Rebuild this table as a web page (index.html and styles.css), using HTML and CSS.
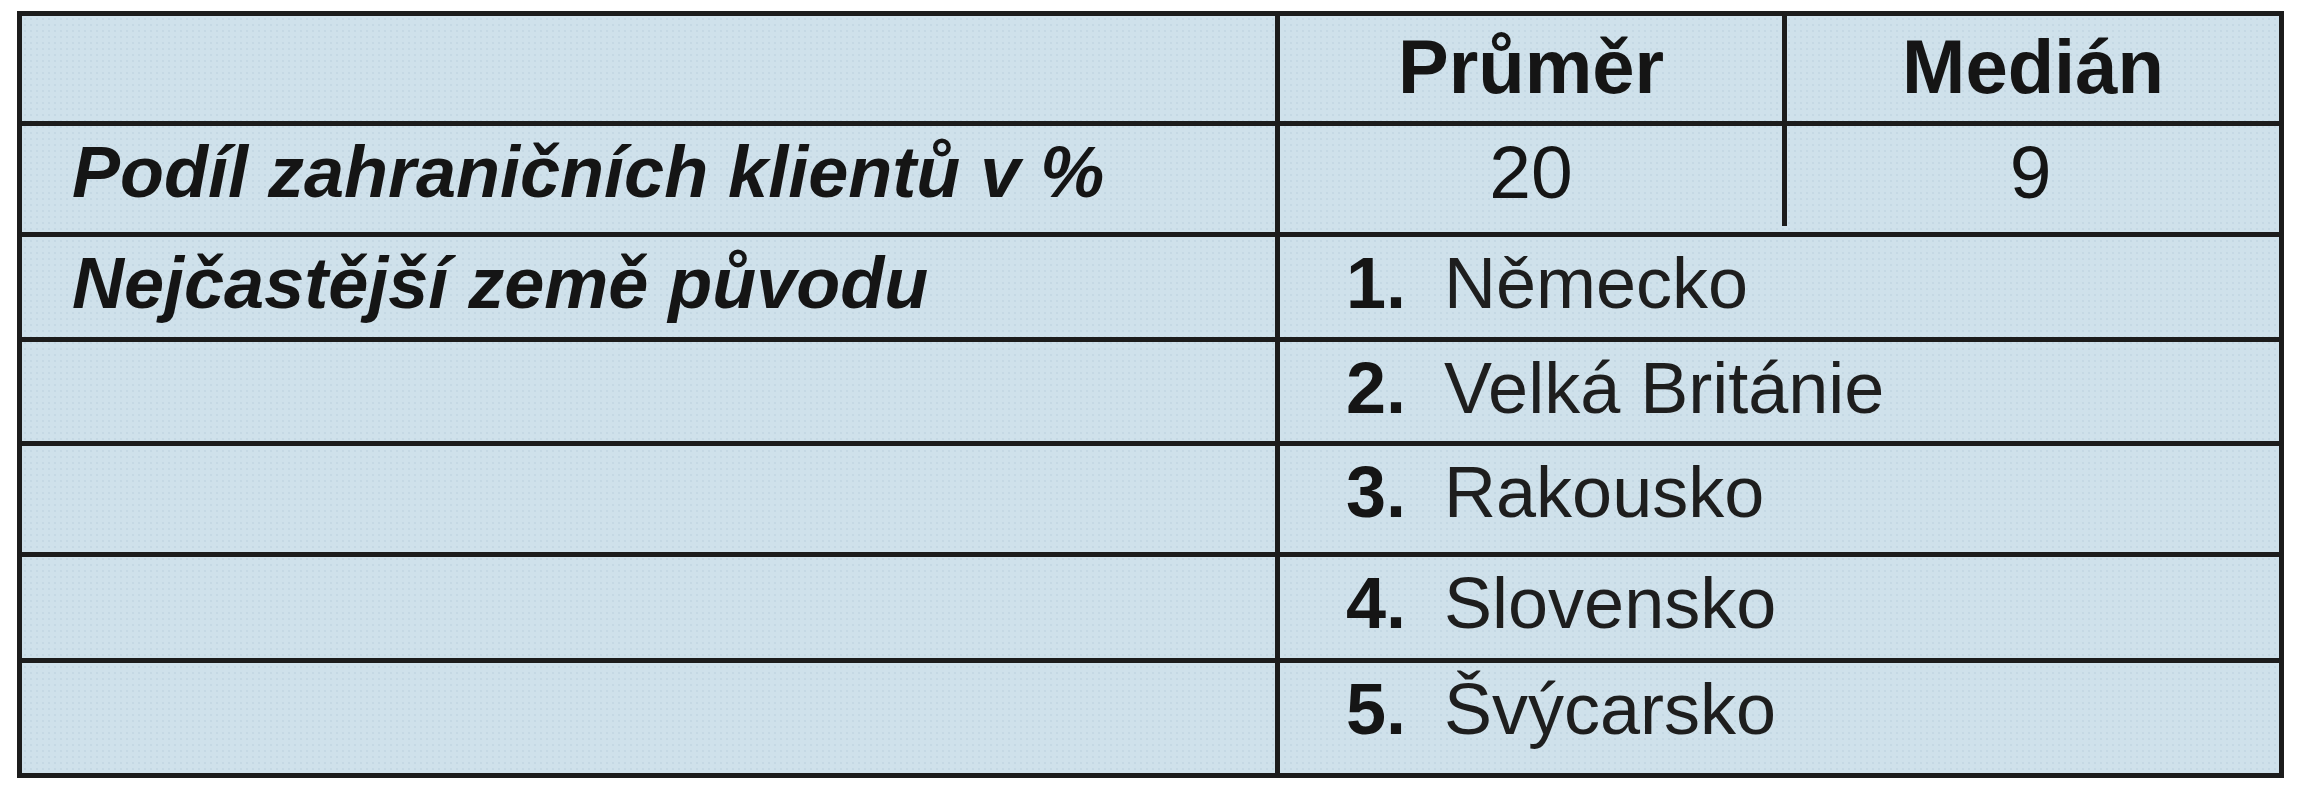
FILE: index.html
```html
<!DOCTYPE html>
<html lang="cs">
<head>
<meta charset="utf-8">
<title>Zahraniční klienti</title>
<link rel="stylesheet" href="styles.css">
</head>
<body>
<div class="tbl">
  <div class="row r-head">
    <div class="cell c-label"></div>
    <div class="cell c-val head bord">Průměr</div>
    <div class="cell c-val head">Medián</div>
  </div>
  <div class="row r1">
    <div class="cell c-label label">Podíl zahraničních klientů v %</div>
    <div class="cell c-val num split">20</div>
    <div class="cell c-val num">9</div>
  </div>
  <div class="row list r2">
    <div class="cell c-label label">Nejčastější země původu</div>
    <div class="cell c-item"><b class="n">1.</b>Německo</div>
  </div>
  <div class="row list r3">
    <div class="cell c-label"></div>
    <div class="cell c-item"><b class="n">2.</b>Velká Británie</div>
  </div>
  <div class="row list r4">
    <div class="cell c-label"></div>
    <div class="cell c-item"><b class="n">3.</b>Rakousko</div>
  </div>
  <div class="row list r5">
    <div class="cell c-label"></div>
    <div class="cell c-item"><b class="n">4.</b>Slovensko</div>
  </div>
  <div class="row list r6">
    <div class="cell c-label"></div>
    <div class="cell c-item"><b class="n">5.</b>Švýcarsko</div>
  </div>
</div>
</body>
</html>
```
FILE: styles.css
```css
html, body {
  margin: 0;
  padding: 0;
  background: #ffffff;
}
body {
  font-family: "Liberation Sans", Arial, sans-serif;
  color: #151515;
}
.tbl {
  position: relative;
  margin: 11px 0 0 17px;
  width: 2267px;
  box-sizing: border-box;
  border: 5px solid #1c1c1c;
  background-color: #cfe1eb;
  background-image: radial-gradient(circle, rgba(150,180,196,0.18) 1px, transparent 1.4px);
  background-size: 6px 6px;
}
.tbl::after {
  content: "";
  position: absolute;
  left: 1253px;
  bottom: -11px;
  width: 5px;
  height: 6px;
  background: #1c1c1c;
}
.row {
  display: grid;
  grid-template-columns: 1258px 507px 492px;
  border-top: 5px solid #1c1c1c;
}
.row.r-head { border-top: none; height: 105px; }
.row.r1 { height: 106px; }
.row.r2 { height: 100px; }
.row.r3 { height: 99px; }
.row.r4 { height: 106px; }
.row.r5 { height: 101px; }
.row.r6 { height: 110px; }
.row.list {
  grid-template-columns: 1258px 999px;
}
.cell {
  box-sizing: border-box;
  line-height: 1;
  white-space: nowrap;
}
.c-label {
  border-right: 5px solid #1c1c1c;
  padding: 10px 0 0 50px;
}
.label {
  font-size: 72px;
  font-weight: bold;
  font-style: italic;
}
.c-val {
  text-align: center;
  position: relative;
}
.head {
  font-size: 76px;
  font-weight: bold;
  padding-top: 13px;
}
.bord {
  border-right: 5px solid #1c1c1c;
}
.num {
  font-size: 75px;
  padding-top: 9px;
  padding-right: 5px;
}
.split::after {
  content: "";
  position: absolute;
  right: 0;
  top: 0;
  bottom: 6px;
  width: 5px;
  background: #1c1c1c;
}
.c-item {
  font-size: 72px;
  padding: 10px 0 0 66px;
  color: #1e1e1e;
}
.n {
  font-weight: bold;
  color: #151515;
  margin-right: 38px;
}
```
